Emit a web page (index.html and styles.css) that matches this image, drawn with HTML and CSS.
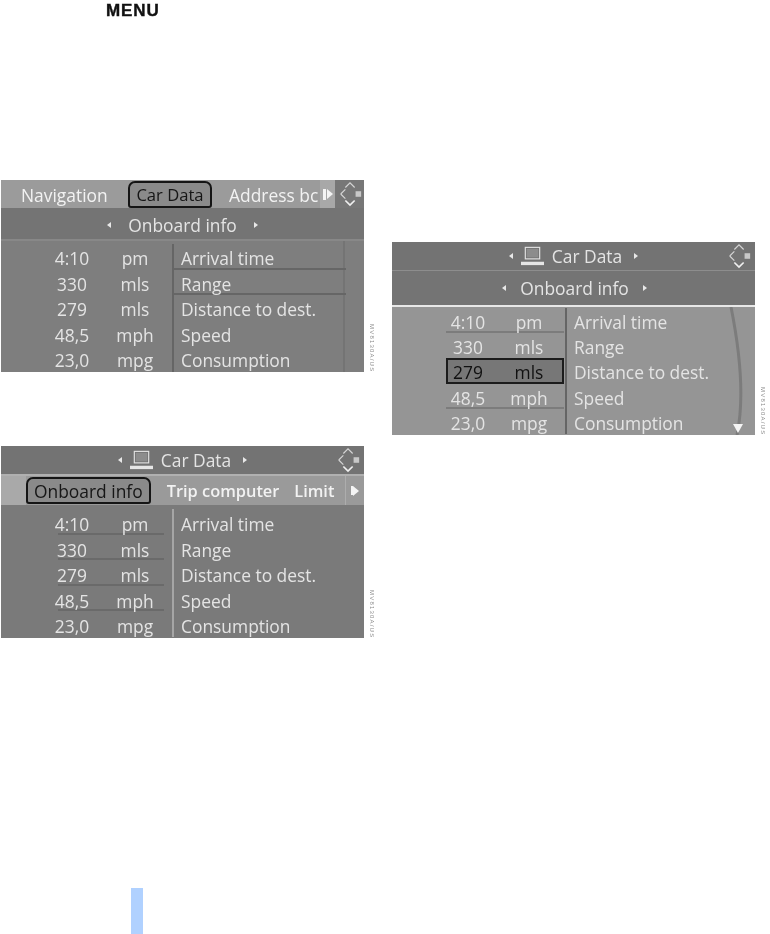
FILE: index.html
```html
<!DOCTYPE html>
<html lang="en">
<head>
    <meta charset="UTF-8">
    <meta name="viewport" content="width=device-width, initial-scale=1.0">
    <title>Car Data</title>
    <link rel="stylesheet" href="styles.css">
</head>
<body>
    <svg width="0" height="0" class="defs">
        <symbol id="ctrl" viewBox="0 0 28 28">
            <path d="M4 14 L9 9 M4 14 L9 19 M9 7 L14 2 L19 7" fill="none" stroke="#d6d6d6" stroke-width="1.2"/>
            <path d="M9 21 L14 26 L19 21" fill="none" stroke="#f0f0f0" stroke-width="1.8"/>
            <rect x="20" y="11" width="6" height="6" fill="#c8c8c8"/>
        </symbol>
        <symbol id="pc" viewBox="0 0 24 20">
            <rect x="4.5" y="1" width="15" height="12" fill="none" stroke="#e2e2e2" stroke-width="1.2"/>
            <rect x="6" y="2.5" width="12" height="9" fill="#8c8c8c"/>
            <rect x="0" y="16" width="24" height="3.5" fill="#e6e6e6"/>
        </symbol>
    </svg>

    <div class="menu-line"><span class="menu-word">MENU</span></div>

    <div class="shots">
        <div class="col col-left">
            <div class="shot-wrap">
                <section class="screen">
                    <div class="bar tabs tabs-main">
                        <span class="tab tab-nav">Navigation</span>
                        <span class="tab tab-on tab-car">Car Data</span>
                        <span class="tab tab-addr">Address bc</span>
                        <span class="more"><i class="more-arrow"></i></span>
                        <span class="ctrl-box"><svg class="ctrl"><use href="#ctrl"/></svg></span>
                    </div>
                    <div class="bar sub sub-lined">
                        <i class="tri tri-l"></i><span>Onboard info</span><i class="tri tri-r"></i>
                    </div>
                    <div class="table table-one">
                        <div class="row"><span class="cells"><span class="val">4:10</span><span class="unit">pm</span></span><span class="label line-label">Arrival time</span></div>
                        <div class="row"><span class="cells"><span class="val">330</span><span class="unit">mls</span></span><span class="label line-label">Range</span></div>
                        <div class="row"><span class="cells"><span class="val">279</span><span class="unit">mls</span></span><span class="label">Distance to dest.</span></div>
                        <div class="row"><span class="cells"><span class="val">48,5</span><span class="unit">mph</span></span><span class="label">Speed</span></div>
                        <div class="row"><span class="cells"><span class="val">23,0</span><span class="unit">mpg</span></span><span class="label">Consumption</span></div>
                    </div>
                </section>
                <span class="code">MV8130A/US</span>
            </div>

            <div class="shot-wrap">
                <section class="screen">
                    <div class="bar title">
                        <i class="tri tri-l"></i><svg class="pc"><use href="#pc"/></svg><span>Car Data</span><i class="tri tri-r"></i>
                        <svg class="ctrl ctrl-float"><use href="#ctrl"/></svg>
                    </div>
                    <div class="bar tabs tabs-second">
                        <span class="tab tab-on tab-board">Onboard info</span>
                        <span class="tab tab-trip">Trip computer</span>
                        <span class="tab tab-limit">Limit</span>
                        <span class="more"><i class="more-arrow"></i></span>
                    </div>
                    <div class="table table-two">
                        <div class="row"><span class="cells line-val"><span class="val">4:10</span><span class="unit">pm</span></span><span class="label">Arrival time</span></div>
                        <div class="row"><span class="cells line-val"><span class="val">330</span><span class="unit">mls</span></span><span class="label">Range</span></div>
                        <div class="row"><span class="cells line-val"><span class="val">279</span><span class="unit">mls</span></span><span class="label">Distance to dest.</span></div>
                        <div class="row"><span class="cells line-val"><span class="val">48,5</span><span class="unit">mph</span></span><span class="label">Speed</span></div>
                        <div class="row"><span class="cells"><span class="val">23,0</span><span class="unit">mpg</span></span><span class="label">Consumption</span></div>
                    </div>
                </section>
                <span class="code">MV8130A/US</span>
            </div>
        </div>

        <div class="col col-right">
            <div class="shot-wrap">
                <section class="screen screen-tall">
                    <div class="bar title">
                        <i class="tri tri-l"></i><svg class="pc"><use href="#pc"/></svg><span>Car Data</span><i class="tri tri-r"></i>
                        <svg class="ctrl ctrl-float"><use href="#ctrl"/></svg>
                    </div>
                    <div class="bar sub sub-bright">
                        <i class="tri tri-l"></i><span>Onboard info</span><i class="tri tri-r"></i>
                    </div>
                    <div class="table table-three">
                        <div class="row"><span class="cells line-val"><span class="val">4:10</span><span class="unit">pm</span></span><span class="label">Arrival time</span></div>
                        <div class="row"><span class="cells"><span class="val">330</span><span class="unit">mls</span></span><span class="label">Range</span></div>
                        <div class="row"><span class="cells picked"><span class="val">279</span><span class="unit">mls</span></span><span class="label">Distance to dest.</span></div>
                        <div class="row"><span class="cells line-val"><span class="val">48,5</span><span class="unit">mph</span></span><span class="label">Speed</span></div>
                        <div class="row"><span class="cells"><span class="val">23,0</span><span class="unit">mpg</span></span><span class="label">Consumption</span></div>
                        <svg class="arc" viewBox="0 0 28 128"><path d="M4 0 Q20 80 10 128" fill="none" stroke="#7c7c7c" stroke-width="3"/></svg>
                        <i class="down"></i>
                    </div>
                </section>
                <span class="code">MV8130A/US</span>
            </div>
        </div>
    </div>

    <div class="side-bar"></div>
</body>
</html>
```

FILE: styles.css
```css
html, body {
    margin: 0;
    padding: 0;
    background: white;
}

body {
    display: flex;
    flex-direction: column;
    height: 934px;
    overflow: hidden;
}

.defs {
    display: block;
    height: 0;
}

.menu-line {
    height: 16px;
    padding: 2px 0 0 106px;
}

.menu-word {
    display: block;
    font-family: "Liberation Sans", Arial, sans-serif;
    font-weight: bold;
    font-size: 17px;
    line-height: 18px;
    letter-spacing: 0.9px;
    color: #111;
    filter: blur(0.4px);
    -webkit-text-stroke: 0.4px #111;
}

.shots {
    flex: 1;
    display: flex;
}

.col {
    display: flex;
    flex-direction: column;
}

.col-left {
    width: 392px;
    padding: 162px 0 0 1px;
    box-sizing: border-box;
    gap: 74px;
}

.col-right {
    padding-top: 224px;
}

.shot-wrap {
    display: flex;
    align-items: flex-end;
    gap: 4px;
}

/* the screen photos */
.screen {
    width: 363px;
    height: 192px;
    display: flex;
    flex-direction: column;
    background: #7b7b7b;
    font-family: "Open Sans", "Noto Sans", sans-serif;
    font-size: 17.4px;
    color: #e4e4e4;
    filter: blur(0.7px);
    overflow: hidden;
}

.screen-tall {
    height: 193px;
}

.bar {
    display: flex;
    align-items: center;
    position: relative;
    box-sizing: border-box;
}

.tabs {
    height: 28px;
    background: #9b9b9b;
    color: #f2f2f2;
}

.tab {
    display: block;
    white-space: nowrap;
}

.tab-nav {
    margin-left: 20px;
    width: 107px;
    padding-top: 2px;
}

.tab-on {
    box-sizing: border-box;
    height: 27px;
    line-height: 24px;
    border: 2px solid #151515;
    border-radius: 7px 7px 3px 3px;
    color: #161616;
    background: #8a8a8a;
    text-align: center;
}

.tab-car {
    width: 84px;
    font-size: 16.6px;
}

.tab-addr {
    margin-left: 17px;
    width: 91px;
    overflow: hidden;
    padding-top: 2px;
}

.more {
    width: 15px;
    height: 28px;
    display: flex;
    align-items: center;
    justify-content: center;
    gap: 1px;
    background: #a8a8a8;
}

.more::before {
    content: "";
    width: 3px;
    height: 11px;
    background: #f4f4f4;
}

.more-arrow {
    width: 0;
    height: 0;
    border-left: 6px solid #f4f4f4;
    border-top: 5px solid transparent;
    border-bottom: 5px solid transparent;
}

.ctrl-box {
    flex: 1;
    height: 28px;
    display: flex;
    align-items: center;
    justify-content: center;
    background: #777;
}

.ctrl {
    width: 26px;
    height: 26px;
}

.ctrl-float {
    position: absolute;
    right: 3px;
    top: 1px;
}

.sub {
    height: 33px;
    justify-content: center;
    background: #747474;
    gap: 17px;
    padding-top: 2px;
}

.sub-lined {
    border-bottom: 2px solid #888;
}

.sub-bright {
    height: 37px;
    border-top: 1px solid #8d8d8d;
    border-bottom: 2px solid #e8e8e8;
    padding-top: 0;
    padding-left: 2px;
    gap: 14px;
}

.title {
    height: 28px;
    justify-content: center;
    background: #737373;
    gap: 8px;
}

.title .tri-r {
    margin-left: 4px;
}

.tabs-second {
    padding-left: 25px;
    border-top: 2px solid #b0b0b0;
    height: 31px;
    background: linear-gradient(to right, #a9a9a9 25px, #9a9a9a 25px);
}

.tab-board {
    width: 125px;
}

.tab-trip {
    margin-left: 16px;
    width: 128px;
    font-weight: 600;
    font-size: 16.4px;
}

.tab-limit {
    width: 51px;
    font-weight: 600;
    font-size: 16.4px;
}

.tabs-second .more {
    background: none;
    border-left: 1px solid #adadad;
    width: 18px;
    height: 29px;
    gap: 0;
}

.tabs-second .more::before {
    width: 2px;
    height: 9px;
}

.tri {
    display: block;
    width: 0;
    height: 0;
    border-top: 3px solid transparent;
    border-bottom: 3px solid transparent;
}

.tri-l {
    border-right: 4px solid #e8e8e8;
}

.tri-r {
    border-left: 4px solid #e8e8e8;
}

.pc {
    width: 23px;
    height: 20px;
}

/* value rows */
.table {
    flex: 1;
    position: relative;
    display: flex;
    flex-direction: column;
    min-height: 0;
}

.table-one {
    padding-top: 3px;
    background: linear-gradient(to right, #7e7e7e 342px, #747474 342px, #747474 344px, #7e7e7e 344px);
}

.table-two {
    padding-top: 4px;
    background: #7a7a7a;
}

.table-three {
    padding-top: 1px;
    background: #959595;
}

.row {
    height: 25.6px;
    flex: none;
    display: flex;
    align-items: stretch;
    line-height: 30px;
}

.table-one .row {
    line-height: 28px;
}

.table-three .row {
    height: 25.2px;
    line-height: 28px;
}

.cells {
    display: flex;
    box-sizing: border-box;
    width: 106px;
    margin-left: 57px;
    margin-right: 8px;
}

.val {
    flex: none;
    width: 40px;
    margin-left: -6px;
    text-align: center;
}

.unit {
    flex: none;
    width: 50px;
    margin-left: 18px;
    text-align: center;
}

.label {
    flex: 1;
    padding-left: 7px;
    border-left: 2px solid #656565;
    white-space: nowrap;
}

.table-two .label {
    border-left-color: #a6a6a6;
}

.line-label {
    box-shadow: inset 0 -2px 0 #666;
    margin-right: 18px;
}

.line-val {
    box-shadow: inset 0 -2px 0 #6a6a6a;
}

.table-three .cells {
    width: 118px;
    margin-left: 54px;
    margin-right: 1px;
}

.table-three .val {
    margin-left: 2px;
}

.table-three .unit {
    margin-left: 16px;
}

.table-three .line-val {
    box-shadow: inset 0 -2px 0 #7c7c7c;
}

.table-three .picked {
    height: 26px;
    line-height: 24px;
    border: 2px solid #1c1c1c;
    background: #777;
    color: #111;
}

.picked .val {
    margin-left: 0;
}

.arc {
    position: absolute;
    left: 335px;
    top: 0;
    width: 28px;
    height: 128px;
}

.down {
    position: absolute;
    right: 12px;
    bottom: 2px;
    width: 0;
    height: 0;
    border-left: 5px solid transparent;
    border-right: 5px solid transparent;
    border-top: 9px solid #f4f4f4;
}

.code {
    writing-mode: vertical-rl;
    font-family: "Liberation Sans", sans-serif;
    font-size: 6px;
    line-height: 7px;
    color: #8c8c8c;
    letter-spacing: 1.2px;
    filter: blur(0.3px);
}

.side-bar {
    flex: none;
    width: 12px;
    height: 46px;
    margin-left: 131px;
    background: #b0d1ff;
}
```
